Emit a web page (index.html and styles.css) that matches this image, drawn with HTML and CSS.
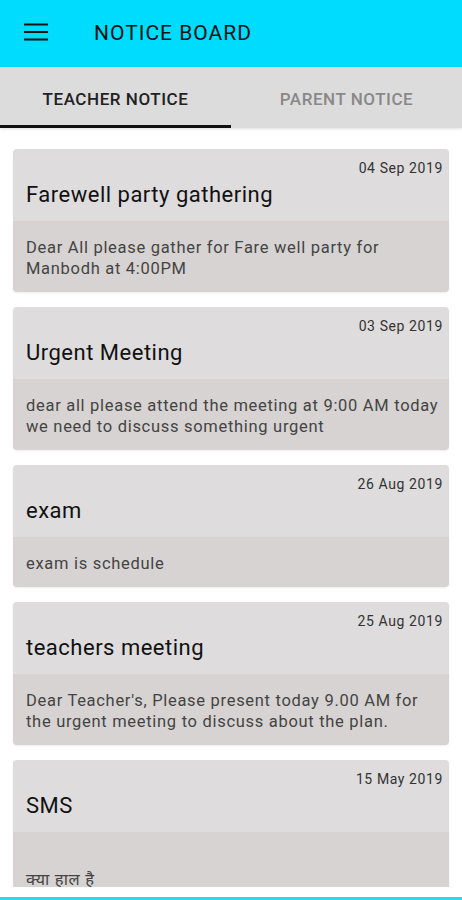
FILE: index.html
```html
<!DOCTYPE html>
<html lang="en">
<head>
  <meta charset="UTF-8">
  <title>Notice Board</title>
  <link rel="stylesheet" href="styles.css">
</head>
<body>

<header class="appbar">
  <svg class="menu" width="24" height="20" viewBox="0 0 24 20">
    <path d="M0 1.5h24M0 9h24M0 16.5h24" stroke="#111" stroke-width="2.2" fill="none"/>
  </svg>
  <h1>NOTICE BOARD</h1>
</header>

<nav class="tabs">
  <div class="tab active">TEACHER NOTICE</div>
  <div class="tab">PARENT NOTICE</div>
</nav>

<main class="list">
  <div class="card">
    <div class="card-head">
      <div class="date">04 Sep 2019</div>
      <h2>Farewell party gathering</h2>
    </div>
    <div class="card-body">Dear All please gather for Fare well party for Manbodh at 4:00PM</div>
  </div>

  <div class="card">
    <div class="card-head">
      <div class="date">03 Sep 2019</div>
      <h2>Urgent Meeting</h2>
    </div>
    <div class="card-body">dear all please attend the meeting at 9:00 AM today we need to discuss something urgent</div>
  </div>

  <div class="card">
    <div class="card-head">
      <div class="date">26 Aug 2019</div>
      <h2>exam</h2>
    </div>
    <div class="card-body">exam is schedule</div>
  </div>

  <div class="card">
    <div class="card-head">
      <div class="date">25 Aug 2019</div>
      <h2>teachers meeting</h2>
    </div>
    <div class="card-body">Dear Teacher's, Please present today 9.00 AM for the urgent meeting to discuss about the plan.</div>
  </div>

  <div class="card">
    <div class="card-head">
      <div class="date">15 May 2019</div>
      <h2>SMS</h2>
    </div>
    <div class="card-body"><br>क्या हाल है</div>
  </div>
</main>

<div class="bottom-line"></div>

</body>
</html>
```

FILE: styles.css
```css
body {
  margin: 0;
  padding: 0;
  background: #fff;
  font-family: Roboto, "Noto Sans", "Noto Sans Devanagari", sans-serif;
  height: 900px;
  overflow: hidden;
}
.appbar {
  height: 67px;
  background-color: #00dcfd;
  display: flex;
  align-items: center;
}
.appbar .menu {
  margin-left: 24px;
  margin-top: -2px;
}
.appbar h1 {
  margin: -2px 0 0 46px;
  font-size: 21px;
  font-weight: 400;
  line-height: 24px;
  letter-spacing: 1px;
  color: #111;
}
.tabs {
  height: 61px;
  background-color: #dddcdd;
  display: flex;
  position: relative;
  z-index: 1;
  box-shadow: 0 1px 3px rgba(0,0,0,0.12);
}
.tab {
  flex: 1;
  text-align: center;
  padding-top: 22px;
  font-size: 17px;
  font-weight: 500;
  line-height: 20px;
  letter-spacing: 0.55px;
  color: #888;
  position: relative;
}
.tab.active {
  color: #222;
}
.tab.active::after {
  content: "";
  position: absolute;
  left: 0; right: 0; bottom: 0;
  height: 3px;
  background: #111;
}
.list {
  height: 738px;
  padding-top: 21px;
  overflow: hidden;
}
.card {
  margin: 0 13px 15px;
  border-radius: 4px;
  overflow: hidden;
  box-shadow: 0 1px 2px rgba(0,0,0,0.08);
}
.card-head {
  background-color: #dedcdd;
  padding: 9px 6px 12px 13px;
}
.date {
  text-align: right;
  font-size: 14px;
  line-height: 20px;
  letter-spacing: 0.6px;
  color: #333;
}
.card-head h2 {
  margin: 3px 0 0;
  font-size: 22px;
  font-weight: 400;
  line-height: 28px;
  letter-spacing: 0.5px;
  color: #111;
}
.card-body {
  background-color: #d6d3d2;
  padding: 16px 5px 13px 13px;
  font-size: 16.5px;
  line-height: 21px;
  letter-spacing: 0.7px;
  color: #444;
}
.bottom-line {
  margin-top: 10px;
  height: 3px;
  background-color: #2ed8ef;
}
```
